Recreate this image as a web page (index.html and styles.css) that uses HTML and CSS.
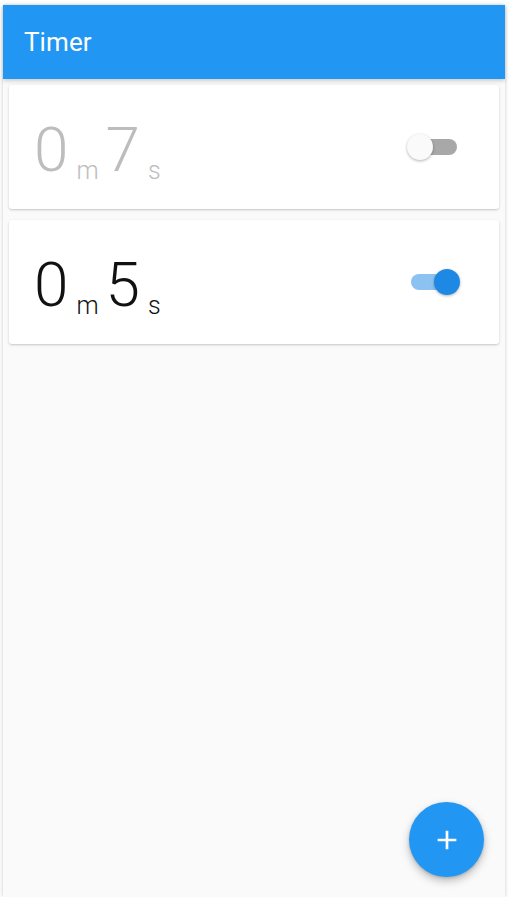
FILE: index.html
```html
<!DOCTYPE html>
<html lang="en">
<head>
    <meta charset="UTF-8">
    <meta name="viewport" content="width=device-width, initial-scale=1.0">
    <title>Timer</title>
    <link rel="stylesheet" href="styles.css">
</head>
<body>
    <div class="phone">
        <!-- Top app bar -->
        <header class="app-bar">
            <h1>Timer</h1>
        </header>

        <!-- Timer list -->
        <main class="timer-list">
            <div class="timer-card is-off">
                <div class="time">
                    <span class="num">0</span><span class="unit">m</span><span class="num">7</span><span class="unit">s</span>
                </div>
                <span class="switch">
                    <span class="track"></span>
                    <span class="thumb"></span>
                </span>
            </div>

            <div class="timer-card is-on">
                <div class="time">
                    <span class="num">0</span><span class="unit">m</span><span class="num">5</span><span class="unit">s</span>
                </div>
                <span class="switch">
                    <span class="track"></span>
                    <span class="thumb"></span>
                </span>
            </div>
        </main>

        <!-- Add button -->
        <button class="fab" type="button" aria-label="Add timer">
            <svg width="32" height="32" viewBox="0 0 24 24">
                <path d="M19 13h-6v6h-2v-6H5v-2h6V5h2v6h6v2z" fill="#fff"/>
            </svg>
        </button>
    </div>
</body>
</html>
```

FILE: styles.css
```css
/* General reset */
* {
    margin: 0;
    padding: 0;
    box-sizing: border-box;
}

body {
    font-family: Roboto, "Noto Sans", Arial, sans-serif;
    background-color: #ffffff;
    padding: 5px 0 0 3px;
}

/* Device frame */
.phone {
    position: relative;
    width: 502px;
    height: 892px;
    background-color: #fafafa;
    box-shadow: 0 0 4px rgba(0, 0, 0, 0.22);
    display: flex;
    flex-direction: column;
}

/* App bar */
.app-bar {
    height: 74px;
    background-color: #2196f3;
    display: flex;
    align-items: center;
    padding-left: 21px;
    box-shadow: 0 2px 4px rgba(0, 0, 0, 0.18);
    position: relative;
    z-index: 1;
}

.app-bar h1 {
    color: #ffffff;
    font-size: 26px;
    font-weight: 400;
    letter-spacing: 0.1px;
}

/* Timer cards */
.timer-list {
    padding: 6px 6px;
    display: flex;
    flex-direction: column;
    gap: 11px;
}

.timer-card {
    height: 124px;
    background-color: #ffffff;
    border-radius: 3px;
    box-shadow: 0 1px 3px rgba(0, 0, 0, 0.16), 0 1px 1px rgba(0, 0, 0, 0.06);
    display: flex;
    align-items: center;
    justify-content: space-between;
    padding: 0 39px 0 25px;
}

.time {
    line-height: 1;
    white-space: nowrap;
    padding-top: 8px;
}

.time .num {
    font-size: 62px;
    font-weight: 300;
}

.time .unit {
    font-size: 25px;
    font-weight: 300;
    margin: 0 7px 0 8px;
    vertical-align: -8px;
}

.is-off .time {
    color: #bdbdbd;
}

.is-on .time {
    color: #111111;
}

/* Toggle switch */
.switch {
    position: relative;
    width: 53px;
    height: 26px;
    display: block;
}

.switch .track {
    position: absolute;
    left: 4px;
    top: 5px;
    width: 46px;
    height: 16px;
    border-radius: 8px;
}

.switch .thumb {
    position: absolute;
    top: 0;
    width: 26px;
    height: 26px;
    border-radius: 50%;
    box-shadow: 0 1px 3px rgba(0, 0, 0, 0.3);
}

.is-off .track {
    background-color: #a8a8a8;
}

.is-off .thumb {
    left: 0;
    background-color: #fafafa;
}

.is-on .track {
    background-color: #8cc2f2;
}

.is-on .thumb {
    left: 27px;
    background-color: #1e88e5;
}

/* Floating action button */
.fab {
    position: absolute;
    right: 21px;
    bottom: 20px;
    width: 75px;
    height: 75px;
    border: none;
    border-radius: 50%;
    background-color: #2196f3;
    box-shadow: 0 4px 8px rgba(0, 0, 0, 0.25), 0 1px 3px rgba(0, 0, 0, 0.15);
    display: flex;
    align-items: center;
    justify-content: center;
    cursor: pointer;
}
```
